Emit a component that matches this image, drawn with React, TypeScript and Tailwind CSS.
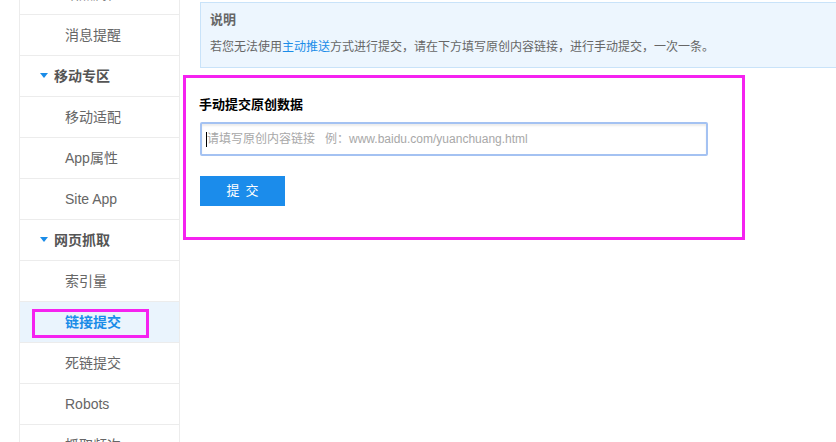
import React from "react";

type Row = { label: string; kind: "sub" | "head" | "active" };

const rows: Row[] = [
  { label: "站点属性", kind: "sub" },
  { label: "消息提醒", kind: "sub" },
  { label: "移动专区", kind: "head" },
  { label: "移动适配", kind: "sub" },
  { label: "App属性", kind: "sub" },
  { label: "Site App", kind: "sub" },
  { label: "网页抓取", kind: "head" },
  { label: "索引量", kind: "sub" },
  { label: "链接提交", kind: "active" },
  { label: "死链提交", kind: "sub" },
  { label: "Robots", kind: "sub" },
  { label: "抓取频次", kind: "sub" },
];

function SideRow({ row }: { row: Row }) {
  if (row.kind === "head") {
    return (
      <div className="h-[41px] border-b border-[#ececec] flex items-center pl-[20px] text-[14px] font-bold text-[#555]">
        <svg width="8" height="5" viewBox="0 0 8 5" className="mr-[6px] mt-[-2px]">
          <polygon points="0,0 8,0 4,5" fill="#1a8ce8" />
        </svg>
        <span>{row.label}</span>
      </div>
    );
  }
  if (row.kind === "active") {
    return (
      <div className="relative h-[41px] border-b border-[#ececec] bg-[#eaf4fd] flex items-center pl-[45px] text-[14px] font-bold text-[#1a8ce8]">
        <span>{row.label}</span>
        <div className="absolute left-[12px] top-[7px] w-[117px] h-[29px] border-[3px] border-[#f522f0]" />
      </div>
    );
  }
  return (
    <div className="h-[41px] border-b border-[#ececec] flex items-center pl-[45px] text-[14px] text-[#666]">
      <span>{row.label}</span>
    </div>
  );
}

export default function App() {
  return (
    <div
      className="w-[836px] h-[442px] overflow-hidden bg-white flex"
      style={{ fontFamily: '"Liberation Sans", "Noto Sans CJK SC", sans-serif' }}
    >
      <div className="ml-[19px] w-[161px] shrink-0 border-l border-r border-[#ececec] h-[442px] overflow-hidden">
        <div className="mt-[-26px]">
          {rows.map((r) => (
            <SideRow key={r.label} row={r} />
          ))}
        </div>
      </div>
      <div className="flex-1 min-w-0 pt-[2px]">
        <div className="ml-[20px] w-[700px] h-[66px] border border-[#c9e3f9] bg-[#edf6fe] pl-[9px] pt-[8px]">
          <div className="text-[13px] font-bold text-[#666] leading-[18px]">说明</div>
          <div className="mt-[9px] text-[12px] text-[#666] leading-[18px] whitespace-nowrap">
            若您无法使用<span className="text-[#1a8ce8]">主动推送</span>方式进行提交，请在下方填写原创内容链接，进行手动提交，一次一条。
          </div>
        </div>
        <div className="ml-[3px] mt-[7px] w-[562px] h-[165px] border-[3px] border-[#f522f0] pl-[14px] pt-[18px]">
          <div className="ml-[-1px] text-[13px] font-bold text-black leading-[18px]">手动提交原创数据</div>
          <div className="relative mt-[8px] w-[508px] h-[34px]">
            <input
              className="w-full h-full border-2 border-[#a4c2f2] rounded-[2px] bg-white pl-[5px] text-[12px] outline-none shadow-[inset_0_2px_2px_rgba(0,0,0,0.08)] placeholder:text-[#a8a8a8]"
              placeholder={"请填写原创内容链接\u00a0\u00a0 例：www.baidu.com/yuanchuang.html"}
            />
            <span className="absolute left-[6px] top-[10px] w-[1px] h-[15px] bg-black" />
          </div>
          <button className="mt-[20px] w-[85px] h-[30px] bg-[#1b8ceb] text-white text-[13px] tracking-[6px] pl-[6px]">
            提交
          </button>
        </div>
      </div>
    </div>
  );
}
